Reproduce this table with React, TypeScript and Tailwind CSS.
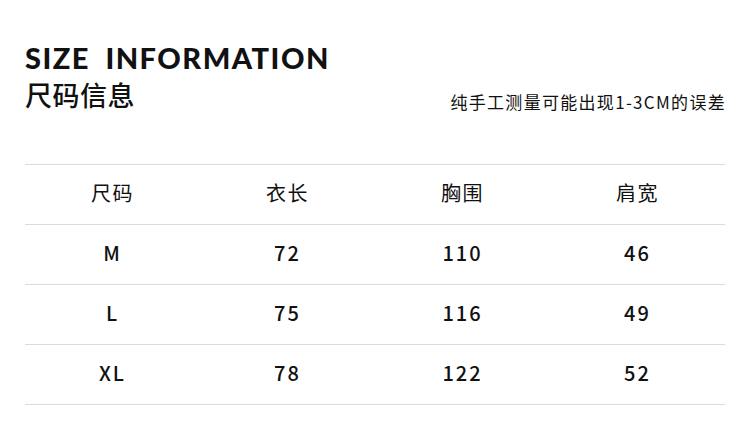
export default function App() {
  const rows = [
    ["M", "72", "110", "46"],
    ["L", "75", "116", "49"],
    ["XL", "78", "122", "52"],
  ];
  const cjk = { fontFamily: '"Noto Sans CJK SC", "Noto Sans", sans-serif' };
  return (
    <div className="w-[750px] h-[446px] bg-white text-[#111] px-[25px] pt-[40px]" style={cjk}>
      <div
        className="text-[29px] leading-[36px] font-black tracking-[1.5px] text-[#111]"
        style={{ fontFamily: '"Lato", "Inter", sans-serif', wordSpacing: "7px" }}
      >
        SIZE INFORMATION
      </div>
      <div className="flex items-end justify-between">
        <div className="text-[27px] leading-[38px] tracking-[0.5px] font-medium">尺码信息</div>
        <div className="text-[17px] leading-[22px] tracking-[1.3px] mb-[1px] mr-[-1px]">纯手工测量可能出现1-3CM的误差</div>
      </div>
      <div className="mt-[50px] border-t border-[#dcdcdc]">
        <div className="grid grid-cols-4 h-[60px] items-center border-b border-[#dcdcdc] text-[20px] tracking-[1.5px] pb-[3px]">
          {["尺码", "衣长", "胸围", "肩宽"].map((t) => (
            <div key={t} className="text-center">{t}</div>
          ))}
        </div>
        {rows.map((r) => (
          <div key={r[0]} className="grid grid-cols-4 h-[60px] items-center border-b border-[#dcdcdc] text-[20px] tracking-[2px] font-medium pb-[4px]">
            {r.map((c, i) => (
              <div key={i} className="text-center">{c}</div>
            ))}
          </div>
        ))}
      </div>
    </div>
  );
}
